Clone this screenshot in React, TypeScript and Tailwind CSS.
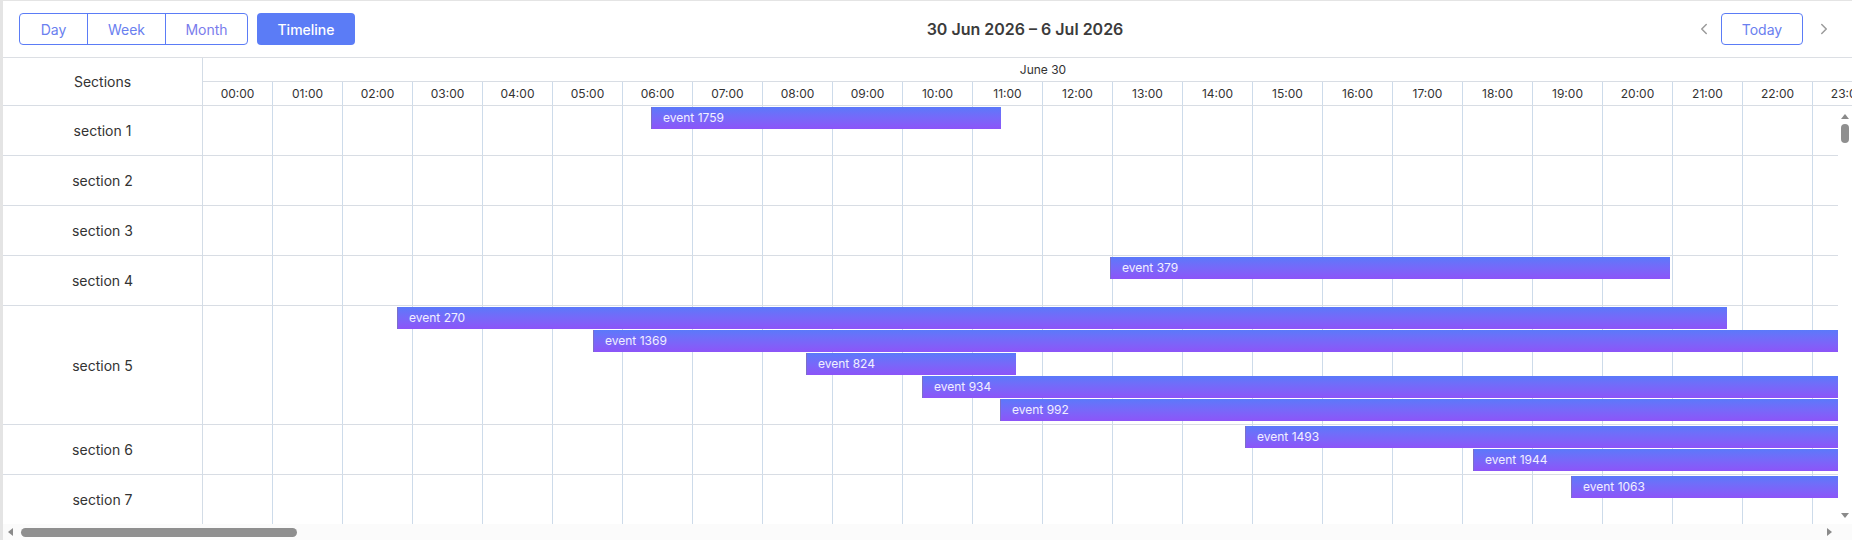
import { ChevronLeft, ChevronRight } from "lucide-react";

const HOUR_W = 70;
const HOURS = Array.from({ length: 26 }, (_, i) => i);

type Ev = { id: number; left: number; width: number; slot: number };
type Section = { name: string; height: number; events: Ev[] };

const SECTIONS: Section[] = [
  { name: "section 1", height: 50, events: [{ id: 1759, left: 448, width: 350, slot: 0 }] },
  { name: "section 2", height: 50, events: [] },
  { name: "section 3", height: 50, events: [] },
  { name: "section 4", height: 50, events: [{ id: 379, left: 907, width: 560, slot: 0 }] },
  {
    name: "section 5",
    height: 119,
    events: [
      { id: 270, left: 194, width: 1330, slot: 0 },
      { id: 1369, left: 390, width: 2000, slot: 1 },
      { id: 824, left: 603, width: 210, slot: 2 },
      { id: 934, left: 719, width: 2000, slot: 3 },
      { id: 992, left: 797, width: 2000, slot: 4 },
    ],
  },
  {
    name: "section 6",
    height: 50,
    events: [
      { id: 1493, left: 1042, width: 2000, slot: 0 },
      { id: 1944, left: 1270, width: 2000, slot: 1 },
    ],
  },
  { name: "section 7", height: 50, events: [{ id: 1063, left: 1368, width: 2000, slot: 0 }] },
];

const pad = (h: number) => `${String(h % 24).padStart(2, "0")}:00`;

function Toolbar() {
  return (
    <div className="flex h-[57px] shrink-0 items-center border-b border-[#dcdfe4] pl-4 pr-[19px]">
      <div className="flex items-center">
        <div className="flex h-8 overflow-hidden rounded-[4px] border border-[#5b7cf6] text-[14px] text-[#6a80ef]">
          <button className="w-[68px] border-r border-[#5b7cf6]">Day</button>
          <button className="w-[78px] border-r border-[#5b7cf6]">Week</button>
          <button className="w-[81px] text-[#7a7cec]">Month</button>
        </div>
        <button className="ml-[9px] h-8 w-[98px] rounded-[4px] bg-[#5b7cf6] text-[14px] font-medium text-white">
          Timeline
        </button>
      </div>
      <div className="flex-1 text-center text-[16px] font-semibold text-[#3b3b3b]">
        30 Jun 2026 – 6 Jul 2026
      </div>
      <div className="flex items-center">
        <ChevronLeft size={18} strokeWidth={2} className="text-[#9b9b9b]" />
        <button className="ml-[8px] h-8 w-[82px] rounded-[4px] border border-[#5b7cf6] text-[14px] text-[#6a80ef]">
          Today
        </button>
        <ChevronRight size={18} strokeWidth={2} className="ml-[12px] text-[#9b9b9b]" />
      </div>
    </div>
  );
}

function EventBar({ ev }: { ev: Ev }) {
  return (
    <div
      className="absolute h-[22px] overflow-hidden whitespace-nowrap border-l border-[#7b6fc8] bg-linear-to-b from-[#5a79fa] to-[#8c54f8] pl-[11px] text-[12px] leading-[22px] text-white/90"
      style={{ left: ev.left, width: ev.width, top: 1 + ev.slot * 23 }}
    >
      event {ev.id}
    </div>
  );
}

function TimelineRow({ section }: { section: Section }) {
  return (
    <div
      className="relative flex shrink-0 border-b border-[#d8dde4]"
      style={{ height: section.height }}
    >
      {HOURS.map((h) => (
        <div key={h} className="h-full w-[70px] shrink-0 border-r border-[#cddbea]" />
      ))}
      {section.events.map((ev) => (
        <EventBar key={ev.id} ev={ev} />
      ))}
    </div>
  );
}

function VScrollbar() {
  return (
    <div className="flex w-[14px] shrink-0 flex-col items-center bg-white">
      <div className="mt-[8px] h-0 w-0 border-x-[4px] border-b-[5px] border-x-transparent border-b-[#8a8a8a]" />
      <div className="mt-[5px] h-[19px] w-[8px] rounded-full bg-[#8f8f8f]" />
      <div className="flex-1" />
      <div className="mb-[6px] h-0 w-0 border-x-[4px] border-t-[5px] border-x-transparent border-t-[#8a8a8a]" />
    </div>
  );
}

function HScrollbar() {
  return (
    <div className="flex h-[16px] shrink-0 items-center bg-[#fbfbfb] pr-[14px]">
      <div className="ml-[5px] h-0 w-0 border-y-[4px] border-r-[5px] border-y-transparent border-r-[#8a8a8a]" />
      <div className="ml-[8px] h-[9px] w-[276px] rounded-full bg-[#8f8f8f]" />
      <div className="flex-1" />
      <div className="mr-[6px] h-0 w-0 border-y-[4px] border-l-[5px] border-y-transparent border-l-[#8a8a8a]" />
    </div>
  );
}

export default function App() {
  return (
    <div className="flex h-[540px] w-[1852px] flex-col overflow-hidden border-l-[3px] border-t border-[#e4e4e4] bg-white font-['Inter',sans-serif] text-[#333]">
      <Toolbar />

      <div className="flex min-h-0 flex-1 flex-col">
        {/* header */}
        <div className="flex h-[48px] shrink-0 border-b border-[#d8dde4]">
          <div className="flex w-[200px] shrink-0 items-center justify-center border-r border-[#d3dce6] text-[14px]">
            Sections
          </div>
          <div className="min-w-0 flex-1 overflow-hidden">
            <div className="flex h-[24px] w-[1680px] items-center justify-center border-b border-[#d8dde4] text-[12px]">
              June 30
            </div>
            <div className="flex h-[23px]">
              {HOURS.map((h) => (
                <div
                  key={h}
                  className="flex w-[70px] shrink-0 items-center justify-center border-r border-[#cddbea] text-[12px]"
                >
                  {pad(h)}
                </div>
              ))}
            </div>
          </div>
        </div>

        {/* body */}
        <div className="flex min-h-0 flex-1">
          <div className="w-[200px] shrink-0 overflow-hidden border-r border-[#d3dce6]">
            {SECTIONS.map((s) => (
              <div
                key={s.name}
                className="flex items-center justify-center border-b border-[#d8dde4] text-[14px]"
                style={{ height: s.height }}
              >
                {s.name}
              </div>
            ))}
          </div>
          <div className="min-w-0 flex-1 overflow-hidden">
            {SECTIONS.map((s) => (
              <TimelineRow key={s.name} section={s} />
            ))}
          </div>
          <VScrollbar />
        </div>
      </div>

      <HScrollbar />
    </div>
  );
}
